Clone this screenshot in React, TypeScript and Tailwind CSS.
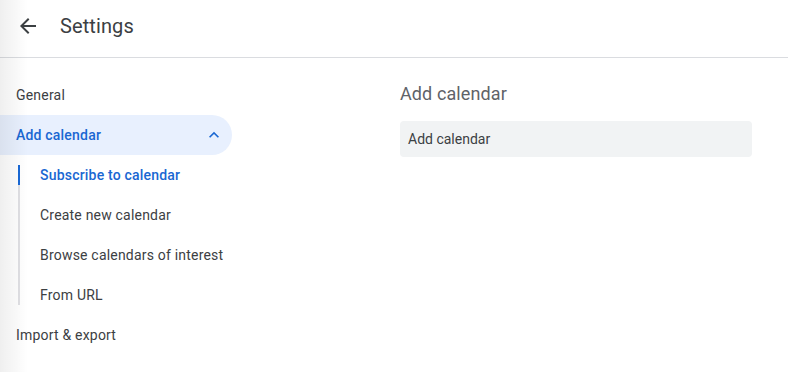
import React from "react";

const font = { fontFamily: "Roboto, 'Noto Sans', Arial, sans-serif" };

export default function App() {
  return (
    <div className="relative w-[788px] h-[372px] bg-white overflow-hidden text-[#3c4043]" style={font}>
      <div className="pointer-events-none absolute left-0 top-0 h-full w-[28px] bg-gradient-to-r from-[#00000010] to-transparent" />
      <header className="flex h-[58px] items-center border-b border-[#dadce0]">
        <div className="ml-[16px] mt-[-5px] flex h-[24px] w-[24px] items-center justify-center">
          <svg width="24" height="24" viewBox="0 0 24 24" fill="#3c4043">
            <path d="M20 11H7.83l5.59-5.59L12 4l-8 8 8 8 1.41-1.41L7.83 13H20v-2z" />
          </svg>
        </div>
        <div className="ml-[20px] mt-[-6px] text-[20px] leading-[28px] tracking-[0.1px] text-[#3c4043]">Settings</div>
      </header>
      <div className="flex">
        <nav className="w-[232px] pt-[17px] text-[14px] tracking-[0.2px]">
          <div className="flex h-[40px] items-center pl-[16px]">General</div>
          <div className="flex h-[40px] items-center justify-between rounded-r-full bg-[#e8f0fe] pl-[16px] pr-[8px] font-medium text-[#1967d2]">
            <span>Add calendar</span>
            <svg width="20" height="20" viewBox="0 0 24 24" fill="#1967d2">
              <path d="M12 8l-6 6 1.41 1.41L12 10.83l4.59 4.58L18 14z" />
            </svg>
          </div>
          <div className="ml-[18px] my-[10px] flex flex-col gap-[20px] border-l-2 border-[#e0e0e4]">
            <div className="relative -ml-[2px] flex h-[20px] items-center border-l-2 border-[#1967d2] pl-[20px] font-medium text-[#1967d2]">
              Subscribe to calendar
            </div>
            <div className="flex h-[20px] items-center pl-[20px]">Create new calendar</div>
            <div className="flex h-[20px] items-center pl-[20px]">Browse calendars of interest</div>
            <div className="flex h-[20px] items-center pl-[20px]">From URL</div>
          </div>
          <div className="flex h-[40px] items-center pl-[16px]">Import &amp; export</div>
        </nav>
        <main className="ml-[168px] w-[352px] pt-[20px]">
          <h2 className="text-[18px] leading-[32px] tracking-[0.1px] text-[#5f6368]">Add calendar</h2>
          <div className="mt-[11px] flex h-[36px] items-center rounded-[4px] bg-[#f1f3f4] pl-[8px] text-[14px] text-[#3c4043]">
            Add calendar
          </div>
        </main>
      </div>
    </div>
  );
}
